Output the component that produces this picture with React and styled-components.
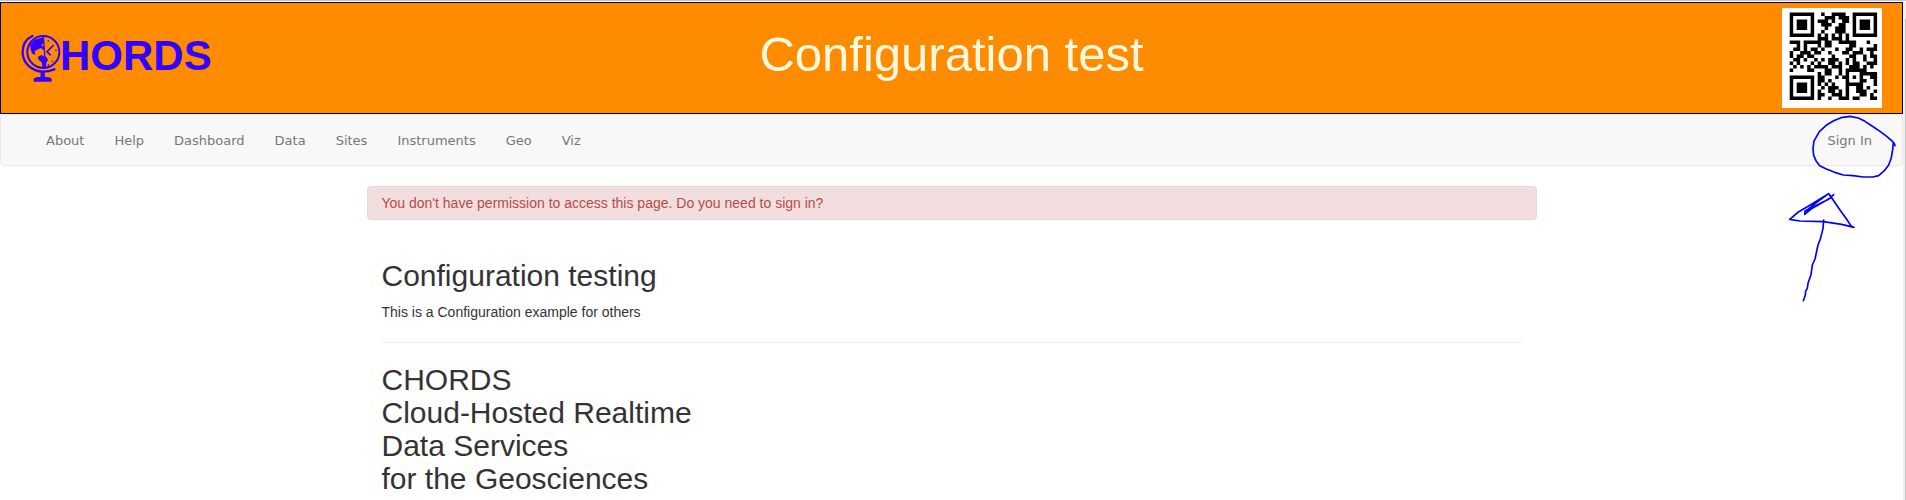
import React from "react";
import styled, { createGlobalStyle } from "styled-components";

const GlobalStyle = createGlobalStyle`
  * { box-sizing: border-box; }
  body { margin: 0; background: #fff; color: #333; font: 14px/20px "Liberation Sans", Arial, sans-serif; }
`;

/* QR code, version 2, error correction level L, mask 0 */
const SIZE = 25;
const EC_WORDS = 10;
const DATA_WORDS = 34;
const FORMAT_BITS = "111011111000100";

function gfMultiply(a, b) {
  let r = 0;
  for (let i = 7; i >= 0; i--) {
    r = (r << 1) ^ ((r >> 7) * 0x11d);
    r ^= ((b >> i) & 1) * a;
  }
  return r;
}

function errorWords(data) {
  const gen = new Array(EC_WORDS).fill(0);
  gen[EC_WORDS - 1] = 1;
  let root = 1;
  for (let i = 0; i < EC_WORDS; i++) {
    for (let j = 0; j < EC_WORDS; j++) {
      gen[j] = gfMultiply(gen[j], root);
      if (j + 1 < EC_WORDS) gen[j] ^= gen[j + 1];
    }
    root = gfMultiply(root, 2);
  }
  const rem = new Array(EC_WORDS).fill(0);
  data.forEach((d) => {
    const f = d ^ rem.shift();
    rem.push(0);
    gen.forEach((g, i) => { rem[i] ^= gfMultiply(g, f); });
  });
  return rem;
}

function qrMatrix(text) {
  const m = Array.from({ length: SIZE }, () => new Array(SIZE).fill(false));
  const used = Array.from({ length: SIZE }, () => new Array(SIZE).fill(false));
  const set = (x, y, v) => {
    if (x < 0 || y < 0 || x >= SIZE || y >= SIZE) return;
    m[y][x] = v;
    used[y][x] = true;
  };
  for (let i = 0; i < SIZE; i++) {
    set(6, i, i % 2 === 0);
    set(i, 6, i % 2 === 0);
  }
  [[3, 3], [SIZE - 4, 3], [3, SIZE - 4]].forEach(([cx, cy]) => {
    for (let dy = -4; dy <= 4; dy++)
      for (let dx = -4; dx <= 4; dx++) {
        const d = Math.max(Math.abs(dx), Math.abs(dy));
        set(cx + dx, cy + dy, d !== 2 && d !== 4);
      }
  });
  for (let dy = -2; dy <= 2; dy++)
    for (let dx = -2; dx <= 2; dx++)
      set(18 + dx, 18 + dy, Math.max(Math.abs(dx), Math.abs(dy)) !== 1);
  const bit = (i) => FORMAT_BITS[14 - i] === "1";
  for (let i = 0; i <= 5; i++) set(8, i, bit(i));
  set(8, 7, bit(6));
  set(8, 8, bit(7));
  set(7, 8, bit(8));
  for (let i = 9; i < 15; i++) set(14 - i, 8, bit(i));
  for (let i = 0; i < 8; i++) set(SIZE - 1 - i, 8, bit(i));
  for (let i = 8; i < 15; i++) set(8, SIZE - 15 + i, bit(i));
  set(8, SIZE - 8, true);

  let bits = "0100" + text.length.toString(2).padStart(8, "0");
  for (const ch of text) bits += ch.charCodeAt(0).toString(2).padStart(8, "0");
  bits += "0000";
  const data = bits.match(/.{8}/g).map((b) => parseInt(b, 2));
  for (let pad = 0xec; data.length < DATA_WORDS; pad ^= 0xec ^ 0x11) data.push(pad);
  const words = data.concat(errorWords(data));

  let k = 0;
  for (let right = SIZE - 1; right >= 1; right -= 2) {
    if (right === 6) right = 5;
    for (let v = 0; v < SIZE; v++)
      for (let j = 0; j < 2; j++) {
        const x = right - j;
        const up = ((right + 1) & 2) === 0;
        const y = up ? SIZE - 1 - v : v;
        if (used[y][x]) continue;
        const w = k < words.length * 8 ? (words[k >> 3] >> (7 - (k & 7))) & 1 : 0;
        k++;
        m[y][x] = (w === 1) !== ((x + y) % 2 === 0);
      }
  }
  return m;
}

function QrCode({ text }) {
  const path = qrMatrix(text)
    .flatMap((row, y) => row.map((on, x) => (on ? `M${x} ${y}h1v1h-1z` : "")))
    .join("");
  return (
    <QrSvg viewBox="-2.2 -1.3 28.6 28.6" role="img" aria-label="QR code">
      <path d={path} fill="#000" />
    </QrSvg>
  );
}

const Page = styled.div`
  display: grid;
  grid-template-columns: minmax(0, 1fr) 3px;
  min-height: 100vh;
  border-top: 1px solid #c4c8cc;
  padding-top: 1px;
  position: relative;
`;
const Content = styled.div``;
const Gutter = styled.div`
  background: #f0f0f0;
  padding-top: 17px;
  display: flex;
  &::after { content: ""; flex: 1; border-right: 1px solid #c1c1c1; }
`;
const Header = styled.header`
  display: grid;
  grid-template-columns: 1fr auto 1fr;
  align-items: center;
  padding: 5px 20px;
  border: 1px solid #000;
  background: #ff8c00;
`;
const Logo = styled.a`
  display: flex;
  align-items: flex-start;
  color: #3300ff;
  font-size: 42px;
  line-height: 46px;
  font-weight: 700;
  text-decoration: none;
`;
const Globe = styled.svg`
  width: 40px;
  height: 50px;
  margin-right: -1px;
  flex: none;
`;
const Title = styled.h1`
  margin: 0;
  padding-bottom: 8px;
  color: cornsilk;
  font-size: 49px;
  line-height: 54px;
  font-weight: 400;
`;
const QrSvg = styled.svg`
  display: block;
  justify-self: end;
  width: 100px;
  height: 100px;
  background: #fff;
`;
const Nav = styled.nav`
  display: flex;
  justify-content: space-between;
  padding: 0 15px 0 30px;
  background: #f8f8f8;
  border: 1px solid #e7e7e7;
  border-radius: 4px;
`;
const NavGroup = styled.div`
  display: flex;
`;
const NavLink = styled.a`
  padding: 16px 15px 14px;
  color: #777;
  font-family: "DejaVu Sans", Verdana, sans-serif;
  font-size: 13px;
  line-height: 20px;
  text-decoration: none;
`;
const Container = styled.main`
  max-width: 1170px;
  margin: 20px auto 0;
`;
const Alert = styled.div`
  padding: 6px 14px;
  color: #b94a48;
  background: #f2dede;
  border: 1px solid #eed3d7;
  border-radius: 4px;
`;
const Section = styled.section`
  padding: 20px 15px 0;
`;
const Heading = styled.h2`
  margin: 19px 0 0;
  font-size: 30px;
  line-height: 33px;
  font-weight: 400;
`;
const Text = styled.p`
  margin: 10px 0;
`;
const Rule = styled.hr`
  margin: 20px 0;
  border: 0;
  border-top: 1px solid #eee;
`;
const Ink = styled.svg`
  position: absolute;
  top: 104px;
  right: 0;
  width: 136px;
  height: 210px;
  pointer-events: none;
`;

const links = ["About", "Help", "Dashboard", "Data", "Sites", "Instruments", "Geo", "Viz"];

function GlobeIcon() {
  return (
    <Globe viewBox="63 98 120 150" fill="none" stroke="#3300ff" aria-hidden="true">
      <circle cx="130" cy="155" r="48" strokeWidth="6" />
      <path d="M97 107C76 117 67 137 68 159C70 189 96 213 128 214C143 214 154 211 163 207" strokeWidth="7" strokeLinecap="round" />
      <path d="M130 107L137 203" strokeWidth="4" />
      <path d="M161 134L141 154L152 165" strokeWidth="5" />
      <path d="M128 214V234" strokeWidth="13" />
      <path d="M101 244V237Q102 231 116 230H140Q154 231 155 237V244Z" fill="#3300ff" stroke="none" />
      <path d="M90 134L104 118L130 111L132 128L124 134L131 140L132 150L122 143L112 148L104 153L106 163L97 160L92 148ZM113 170L124 164L139 170L144 178L139 188L136 204L128 202L125 186L116 179Z" fill="#3300ff" stroke="none" />
      <path d="M143 122h4M165 150h5M155 183h4M143 194h4" strokeWidth="4" />
    </Globe>
  );
}

export default function App() {
  return (
    <>
      <GlobalStyle />
      <Page>
        <Content>
          <Header>
            <Logo href="#" aria-label="CHORDS"><GlobeIcon />HORDS</Logo>
            <Title>Configuration test</Title>
            <QrCode text="http://chordsrt.com" />
          </Header>
          <Nav>
            <NavGroup>
              {links.map((l) => <NavLink key={l} href="#">{l}</NavLink>)}
            </NavGroup>
            <NavLink href="#">Sign In</NavLink>
          </Nav>
          <Container>
            <Alert role="alert">You don't have permission to access this page. Do you need to sign in?</Alert>
            <Section>
              <Heading>Configuration testing</Heading>
              <Text>This is a Configuration example for others</Text>
              <Rule />
              <Heading>
                CHORDS<br />Cloud-Hosted Realtime<br />Data Services<br />for the Geosciences
              </Heading>
            </Section>
          </Container>
        </Content>
        <Gutter />
        <Ink viewBox="0 0 408 630" fill="none" stroke="#0000ff" strokeWidth="5" strokeLinejoin="round" strokeLinecap="round" aria-hidden="true">
          <path d="M375 122L372 114L365 107L350 94L330 79L306 63L285 49L265 39L240 34L213 38L191 47L171 59L148 80L140 94L132 108L129 130L131 151L138 167L149 182L169 192L194 202L220 210L249 212L280 216H308L326 212L343 197L356 180L364 158L368 133L370 112L374 119" />
          <path d="M191 269L177 282L105 318L104 328L123 312L185 277L176 266L117 302L85 321L59 343L90 348L160 350L215 358L252 367L245 365L230 343L210 315L187 281L176 266L139 293L105 320" />
          <path d="M161 345L159 371L151 402L144 420L135 462L127 480L123 509L114 535L112 550L107 558L106 570L100 587" />
        </Ink>
      </Page>
    </>
  );
}
